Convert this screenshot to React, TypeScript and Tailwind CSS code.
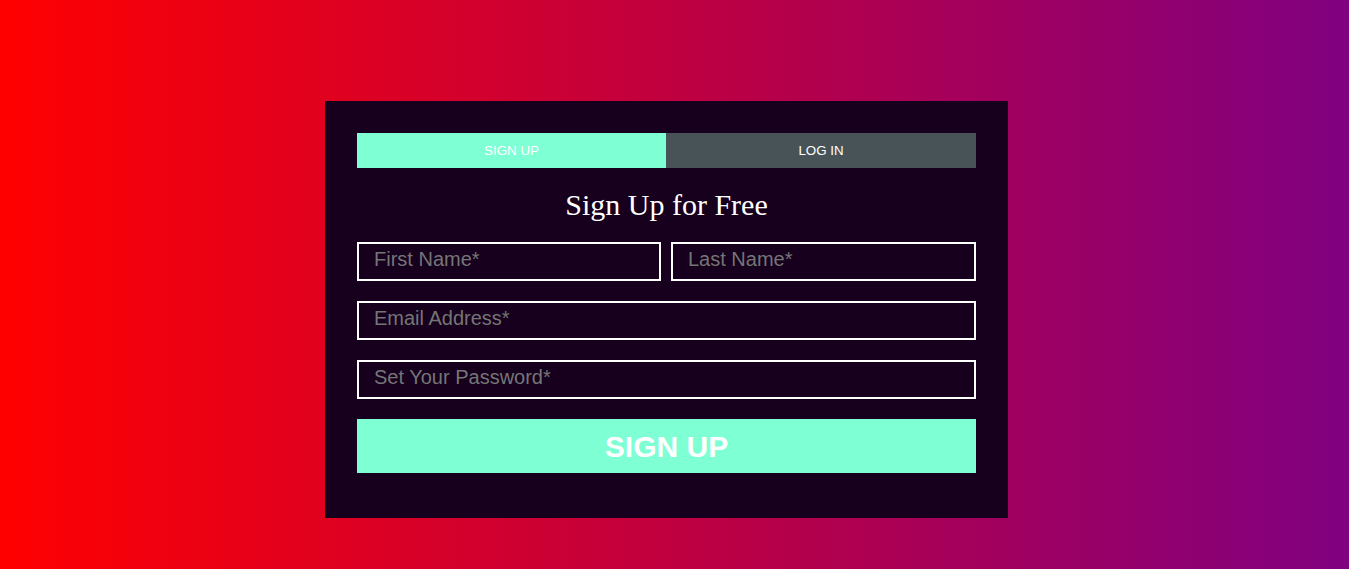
import React from "react";

const inputCls =
	"w-full h-[39px] border-2 border-white bg-transparent pl-[15px] pb-[4px] text-[20px] text-white outline-none placeholder:text-[#757575] font-['Liberation_Sans',Arial,sans-serif]";

export default function App() {
	return (
		<div className="min-h-[569px] w-full bg-[linear-gradient(to_right,#ff0000,#800080)] flex justify-center pr-4 pt-[101px] font-['Liberation_Sans',Arial,sans-serif]">
			<div className="w-[683px] h-[417px] bg-[#16001e] px-8 pt-8">
				{/* Tabs */}
				<div className="grid grid-cols-[309px_1fr] h-[35px] text-[13.33px] text-white">
					<div className="bg-[#7fffd4] flex items-center justify-center">SIGN UP</div>
					<div className="bg-[#485357] flex items-center justify-center">LOG IN</div>
				</div>

				<h1 className="text-center text-white text-[30px] leading-[33px] mt-[20px] mb-[21px] font-['Liberation_Serif','Times_New_Roman',serif]">
					Sign Up for Free
				</h1>

				<div className="flex flex-col gap-5">
					<div className="grid grid-cols-[304px_1fr] gap-[10px]">
						<input className={inputCls} placeholder="First Name*" />
						<input className={inputCls} placeholder="Last Name*" />
					</div>
					<input className={inputCls} placeholder="Email Address*" />
					<input className={inputCls} type="password" placeholder="Set Your Password*" />
					<button className="h-[54px] w-full bg-[#7fffd4] text-white text-[30px] font-bold">
						SIGN UP
					</button>
				</div>
			</div>
		</div>
	);
}
